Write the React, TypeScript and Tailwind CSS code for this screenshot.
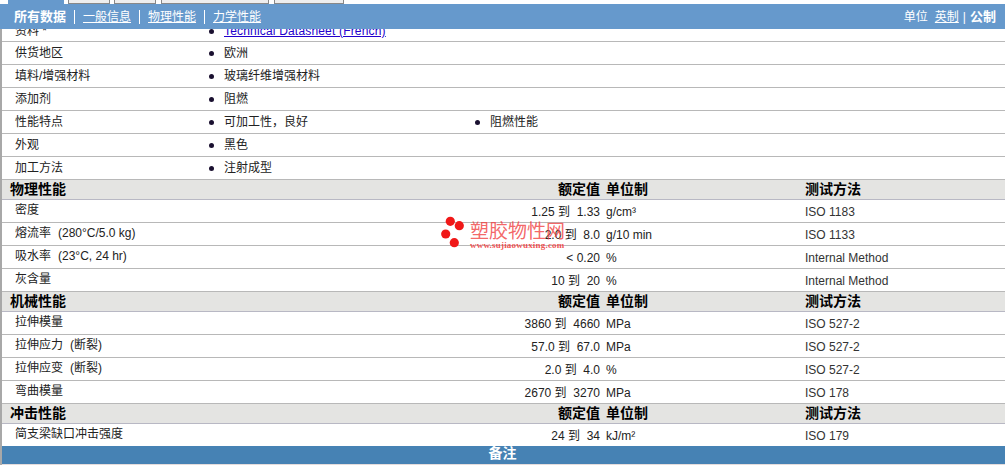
const FONT = "font-['Liberation_Sans','Noto_Sans_CJK_SC',sans-serif]";

type DataRow = { label: string; note?: string; value: string; unit: string; test: string };

const physical: DataRow[] = [
  { label: "密度", value: "1.25 到  1.33", unit: "g/cm³", test: "ISO 1183" },
  { label: "熔流率", note: "(280°C/5.0 kg)", value: "2.0 到  8.0", unit: "g/10 min", test: "ISO 1133" },
  { label: "吸水率", note: "(23°C, 24 hr)", value: "< 0.20", unit: "%", test: "Internal Method" },
  { label: "灰含量", value: "10 到  20", unit: "%", test: "Internal Method" },
];

const mechanical: DataRow[] = [
  { label: "拉伸模量", value: "3860 到  4660", unit: "MPa", test: "ISO 527-2" },
  { label: "拉伸应力", note: "(断裂)", value: "57.0 到  67.0", unit: "MPa", test: "ISO 527-2" },
  { label: "拉伸应变", note: "(断裂)", value: "2.0 到  4.0", unit: "%", test: "ISO 527-2" },
  { label: "弯曲模量", value: "2670 到  3270", unit: "MPa", test: "ISO 178" },
];

const impact: DataRow[] = [
  { label: "简支梁缺口冲击强度", value: "24 到  34", unit: "kJ/m²", test: "ISO 179" },
];

function Bullet() {
  return <span className="h-[5px] w-[5px] rounded-full bg-[#1a1030]" />;
}

function InfoRow({ label, items }: { label: string; items: string[] }) {
  return (
    <div className="flex h-[23px] items-center border-b border-[#b8b8b8] pl-[13px] text-[12px] text-[#222]">
      <div className="w-[194px] shrink-0">{label}</div>
      {items.map((item) => (
        <div key={item} className="flex w-[266px] items-center gap-[10px]">
          <Bullet />
          <span>{item}</span>
        </div>
      ))}
    </div>
  );
}

function SectionHead({ title }: { title: string }) {
  return (
    <div className="flex h-[20px] items-center border-b border-[#b8b8c4] bg-[#e4e4e2] pl-[8px] text-[14px] font-bold text-black">
      <div className="flex-1">{title}</div>
      <div className="w-[43px] text-right">额定值</div>
      <div className="w-[205px] shrink-0 pl-[6px]">单位制</div>
      <div className="w-[200px] shrink-0">测试方法</div>
    </div>
  );
}

function PropRow({ row }: { row: DataRow }) {
  return (
    <div className="flex h-[23px] items-center border-b border-[#b8b8b8] pl-[13px] text-[12px] text-[#222]">
      <div className="mb-[2px] flex-1 whitespace-pre">
        {row.label}
        {row.note && <span className="ml-[7px]">{row.note}</span>}
      </div>
      <div className="mt-[2px] whitespace-pre text-right">{row.value}</div>
      <div className="mt-[2px] w-[205px] shrink-0 pl-[6px]">{row.unit}</div>
      <div className="mt-[2px] w-[200px] shrink-0 text-[#333]">{row.test}</div>
    </div>
  );
}

function Section({ title, rows }: { title: string; rows: DataRow[] }) {
  return (
    <>
      <SectionHead title={title} />
      {rows.map((r) => (
        <PropRow key={r.label} row={r} />
      ))}
    </>
  );
}

function Watermark() {
  return (
    <div className="absolute left-[440px] top-[214px] h-[36px] w-[130px]">
      <svg width="30" height="36" className="absolute left-0 top-0">
        <circle cx="10.3" cy="7.3" r="4.6" fill="#f01818" />
        <circle cx="19.3" cy="11.7" r="4.6" fill="#f01818" />
        <circle cx="5.7" cy="20" r="4.6" fill="#f01818" />
        <circle cx="14.3" cy="28.7" r="4.6" fill="#f01818" />
      </svg>
      <div className="absolute left-[30px] top-[8px] text-[19px] leading-[20px] text-[#f04040]/80">塑胶物性网</div>
      <div className="absolute left-[30px] top-[26px] font-['Liberation_Serif',serif] text-[9px] font-bold leading-[10px] tracking-[0.2px] text-[#f04040]/90">
        www.sujiaowuxing.com
      </div>
    </div>
  );
}

export default function App() {
  return (
    <div className={`relative h-[466px] w-[1005px] overflow-hidden bg-white ${FONT}`}>
      <div className="flex h-[4px] items-start pl-[8px]">
        <div className="h-[4px] w-[56px] bg-[#6699cc]" />
        <div className="ml-[4px] h-[4px] w-[42px] border-x border-b border-[#888] bg-[#eee]" />
        <div className="ml-[4px] h-[4px] w-[42px] border-x border-b border-[#888] bg-[#eee]" />
        <div className="ml-[5px] h-[4px] w-[108px] border-x border-b border-[#888] bg-[#eee]" />
        <div className="ml-[5px] h-[4px] w-[70px] border-x border-b border-[#888] bg-[#eee]" />
      </div>
      <div className="flex h-[25px] items-center justify-between bg-[#6699cc] pl-[14px] pr-[9px] text-[12px] text-white">
        <div className="flex items-center">
          <span className="text-[13px] font-bold">所有数据</span>
          <span className="mx-[8px] h-[14px] w-px bg-white" />
          <span className="underline">一般信息</span>
          <span className="mx-[8px] h-[14px] w-px bg-white" />
          <span className="underline">物理性能</span>
          <span className="mx-[8px] h-[14px] w-px bg-white" />
          <span className="underline">力学性能</span>
        </div>
        <div className="flex items-center">
          <span>单位</span>
          <span className="ml-[7px] underline">英制</span>
          <span className="mx-[4px]">|</span>
          <span className="text-[13px] font-bold">公制</span>
        </div>
      </div>
      <div className="border-l-2 border-[#a8a8a8]">
        <div className="h-[13px] overflow-hidden border-b border-[#b8b8b8]">
          <div className="-mt-[8px] flex h-[20px] items-center pl-[13px] text-[12px] text-[#222]">
            <div className="w-[194px] shrink-0">资料 *</div>
            <div className="flex items-center gap-[10px]">
              <Bullet />
              <span className="tracking-[0.18px] text-[#2200cc] underline">Technical Datasheet (French)</span>
            </div>
          </div>
        </div>
        <InfoRow label="供货地区" items={["欧洲"]} />
        <InfoRow label="填料/增强材料" items={["玻璃纤维增强材料"]} />
        <InfoRow label="添加剂" items={["阻燃"]} />
        <InfoRow label="性能特点" items={["可加工性，良好", "阻燃性能"]} />
        <InfoRow label="外观" items={["黑色"]} />
        <InfoRow label="加工方法" items={["注射成型"]} />
        <Section title="物理性能" rows={physical} />
        <Section title="机械性能" rows={mechanical} />
        <Section title="冲击性能" rows={impact} />
        <div className="relative -mt-px h-[18px] bg-[#4682b4] pr-[2px] text-center text-[14px] font-bold leading-[15px] text-white">备注</div>
        <div className="h-px bg-[#e4dcdc]" />
      </div>
      <Watermark />
    </div>
  );
}
